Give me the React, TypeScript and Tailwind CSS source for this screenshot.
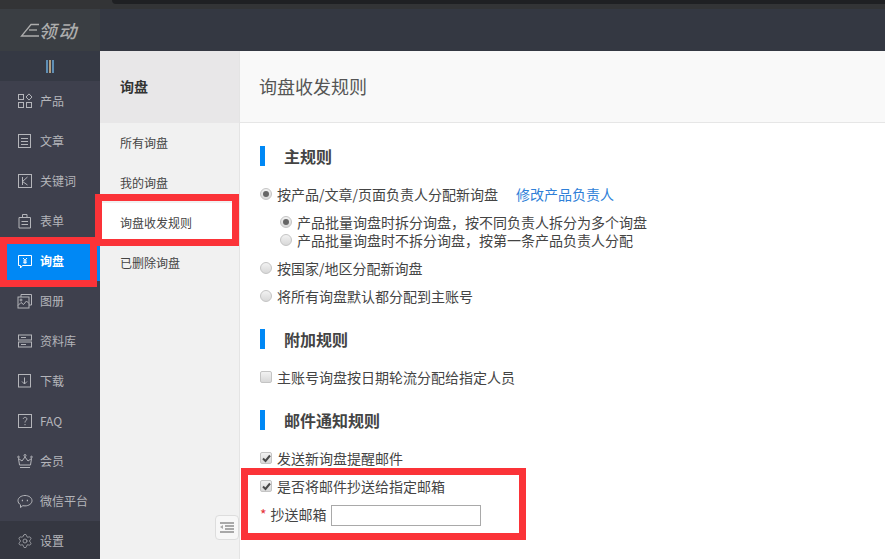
import { ReactNode } from "react";
import { Settings } from "lucide-react";

const ic = {
  width: 16,
  height: 16,
  viewBox: "0 0 16 16",
  fill: "none",
  stroke: "#b4b5ba",
  strokeWidth: 1,
};

const icons: Record<string, ReactNode> = {
  product: (
    <svg {...ic}>
      <rect x="1.5" y="1.5" width="5" height="5" />
      <rect x="1.5" y="9.5" width="5" height="5" />
      <rect x="9.5" y="9.5" width="5" height="5" />
      <path d="M12 .9 15 4l-3 3.1L9 4z" />
    </svg>
  ),
  article: (
    <svg {...ic}>
      <rect x="1.5" y="1.5" width="12" height="13" />
      <path d="M4 5.5h7M4 8.5h7M4 11.5h7" />
    </svg>
  ),
  keyword: (
    <svg {...ic}>
      <rect x="1.5" y="1.5" width="13" height="13" />
      <path d="M5.5 4v8M10.5 4l-5 4.5 5 3.5" />
    </svg>
  ),
  form: (
    <svg {...ic}>
      <path d="M2 4.5h11.5v10.500H2z" />
      <path d="M5.500 4.500V1.500h4.500v3M4.500 8.500h6.500M4.500 11.500h6.500" />
    </svg>
  ),
  inquiry: (
    <svg {...ic} stroke="#ffffff">
      <path d="M1.500 2.500h13v10H5.500L3.500 15v-2.500h-2z" />
      <path d="M6 5l2 2.200L10 5M8 7.200V11M6.200 8h3.600M6.200 9.700h3.600" />
    </svg>
  ),
  album: (
    <svg {...ic}>
      <rect x="1" y="4" width="11" height="11" />
      <path d="M4 4V1.500h10.500V12H12M1 12.500l3-3 2.500 2 3-3.500 2.500 2.500" />
      <circle cx="4" cy="7" r="1" />
    </svg>
  ),
  library: (
    <svg {...ic}>
      <rect x="1.500" y="2" width="13" height="5" />
      <rect x="1.500" y="9" width="13" height="5" />
      <path d="M4 4.500h5M4 11.500h5" />
    </svg>
  ),
  download: (
    <svg {...ic}>
      <rect x="1.500" y="1.500" width="12" height="12.500" />
      <path d="M7.500 4.500v6.500M5 8.500l2.500 2.500L10 8.500" />
    </svg>
  ),
  faq: (
    <svg {...ic}>
      <rect x="1.500" y="1.500" width="13" height="13" />
      <path d="M6.300 6c0-2.200 3.600-2.200 3.600 0 0 1.500-1.900 1.500-1.900 3.500M8 11v1.200" />
    </svg>
  ),
  member: (
    <svg {...ic}>
      <path d="M2.500 12 1.500 5.500 5 8l3-4 3 4 3.500-2.500-1 6.500z" />
      <path d="M3 14.500h10" />
      <circle cx="8" cy="2.500" r="1" />
      <circle cx="1.500" cy="4" r=".8" />
      <circle cx="14.500" cy="4" r=".8" />
    </svg>
  ),
  wechat: (
    <svg {...ic}>
      <path d="M8 2.500c3.800 0 7 2.200 7 5.200s-3.200 5.200-7 5.200c-.8 0-1.500-.1-2.200-.2L3.500 14.500v-2.700C2 10.800 1 9.400 1 7.700c0-3 3.200-5.200 7-5.200z" />
      <path d="M4.800 7.500h1.200M9.800 7.500H11" strokeWidth="1.400" />
    </svg>
  ),
};

const navItems = [
  { key: "product", label: "产品" },
  { key: "article", label: "文章" },
  { key: "keyword", label: "关键词" },
  { key: "form", label: "表单" },
  { key: "inquiry", label: "询盘", active: true },
  { key: "album", label: "图册" },
  { key: "library", label: "资料库" },
  { key: "download", label: "下载" },
  { key: "faq", label: "FAQ" },
  { key: "member", label: "会员" },
  { key: "wechat", label: "微信平台" },
];

const subItems = ["所有询盘", "我的询盘", "询盘收发规则", "已删除询盘"];

function Radio({ checked }: { checked?: boolean }) {
  return (
    <span className="flex h-[12px] w-[12px] shrink-0 items-center justify-center rounded-full border border-[#c4c4c4] bg-gradient-to-b from-[#f2f2f2] to-[#d8d8d8]">
      {checked && <span className="h-[6px] w-[6px] rounded-full bg-[#666666]" />}
    </span>
  );
}

function Checkbox({ checked }: { checked?: boolean }) {
  return (
    <span className="flex h-[12px] w-[12px] shrink-0 items-center justify-center rounded-[2px] border border-[#c4c4c4] bg-gradient-to-b from-[#f2f2f2] to-[#d8d8d8]">
      {checked && (
        <svg width="9" height="9" viewBox="0 0 9 9" fill="none" stroke="#4a4a4a" strokeWidth="2">
          <path d="M1 4.500 3.500 7 8 1.500" />
        </svg>
      )}
    </span>
  );
}

function Option({ control, children, short }: { control: ReactNode; children: ReactNode; short?: boolean }) {
  return (
    <div
      className={
        short
          ? "flex h-[18px] items-center gap-[5px] text-[14px] leading-[18px] text-[#444444]"
          : "flex h-[20px] items-center gap-[5px] text-[14px] text-[#444444]"
      }
    >
      {control}
      <span>{children}</span>
    </div>
  );
}

function SectionTitle({ children }: { children: ReactNode }) {
  return (
    <div className="flex h-[20px] items-center">
      <span className="h-[20px] w-[5px] bg-[#0088f5]" />
      <h2 className="ml-[19px] text-[16px] font-bold text-[#444444]">{children}</h2>
    </div>
  );
}

export default function App() {
  return (
    <div
      className="relative flex h-screen w-full flex-col overflow-hidden bg-white"
      style={{ fontFamily: '"Noto Sans CJK SC", "Liberation Sans", sans-serif' }}
    >
      {/* Browser edge above the app */}
      <div className="h-[9px] shrink-0 bg-[#333436]">
        <div className="ml-[112px] h-[4px] rounded-bl-[6px] bg-[#1f2023]" />
      </div>
      <header className="flex h-[42px] shrink-0 bg-[#343842]">
        <div className="flex w-[100px] items-center justify-center bg-[#3a3e43]">
          <div className="mr-[2px] flex items-center">
            <svg width="20" height="16" viewBox="0 0 20 16" fill="none" stroke="#adadad" strokeWidth="1.300">
              <path d="M19 2.500H11L1.500 14H19" />
              <path d="M9 8h8" />
            </svg>
            <span className="-ml-[1px] text-[18px] font-medium italic leading-none tracking-[2px] text-[#adadad]">
              领动
            </span>
          </div>
        </div>
      </header>

      <div className="flex min-h-0 flex-1">
        {/* Main nav */}
        <aside className="flex w-[100px] shrink-0 flex-col bg-[#3e404d]">
          <div className="flex h-[30px] shrink-0 items-center justify-center gap-[1px] bg-[#353944]">
            <span className="h-[13px] w-[2px] bg-[#5f8fb5]" />
            <span className="h-[13px] w-[2px] bg-[#b39e7e]" />
            <span className="h-[13px] w-[2px] bg-[#5f8fb5]" />
          </div>
          {navItems.map((item) => (
            <div
              key={item.key}
              className={
                item.active
                  ? "flex h-[40px] shrink-0 items-center gap-[7px] bg-[#0088f5] pl-[17px] text-[12px] font-bold text-white"
                  : "flex h-[40px] shrink-0 items-center gap-[7px] pl-[17px] text-[12px] text-[#b4b5ba]"
              }
            >
              {icons[item.key]}
              <span>{item.label}</span>
            </div>
          ))}
          <div className="flex h-[40px] shrink-0 items-center gap-[7px] bg-[#353741] pl-[17px] text-[12px] text-[#b4b5ba]">
            <Settings size={16} strokeWidth={1.1} color="#b4b5ba" />
            <span>设置</span>
          </div>
        </aside>

        {/* Sub nav */}
        <aside className="relative flex w-[140px] shrink-0 flex-col border-r border-[#e4e4e4] bg-[#f1f1f1]">
          <div className="flex h-[72px] items-center bg-[#e8e7e8] pb-[2px] pl-[20px] text-[14px] font-bold text-[#333333]">
            询盘
          </div>
          {subItems.map((s, i) => (
            <div
              key={s}
              className={
                i === 2
                  ? "flex h-[40px] items-center bg-white pl-[20px] text-[12px] text-[#444444]"
                  : "flex h-[40px] items-center pl-[20px] text-[12px] text-[#444444]"
              }
            >
              {s}
            </div>
          ))}
          <button className="absolute bottom-[19px] right-0 flex h-[25px] w-[24px] items-center justify-center rounded-[4px] border border-[#dddddd] bg-[#f7f7f7]">
            <svg width="14" height="11" viewBox="0 0 14 11" fill="#a8a8a8">
              <path d="M0 0h14v2H0zM5 3h9v2H5zM5 6h9v2H5zM0 9h14v2H0zM3 3v4L0 5z" />
            </svg>
          </button>
        </aside>

        {/* Content */}
        <main className="flex min-w-0 flex-1 flex-col">
          <div className="flex h-[72px] shrink-0 items-center border-b border-[#e6e6e6] bg-[#f9f9f9] pl-[19px] text-[18px] text-[#555555]">
            询盘收发规则
          </div>
          <div className="flex flex-col pl-[20px] pt-[23px]">
            <SectionTitle>主规则</SectionTitle>
            <div className="mt-[18px]">
              <Option control={<Radio checked />}>
                按产品/文章/页面负责人分配新询盘
                <a className="ml-[18px] text-[#2f7fd8]">修改产品负责人</a>
              </Option>
            </div>
            <div className="mt-[9px] pl-[20px]">
              <Option short control={<Radio checked />}>
                产品批量询盘时拆分询盘，按不同负责人拆分为多个询盘
              </Option>
              <Option short control={<Radio />}>
                产品批量询盘时不拆分询盘，按第一条产品负责人分配
              </Option>
            </div>
            <div className="mt-[9px]">
              <Option control={<Radio />}>按国家/地区分配新询盘</Option>
            </div>
            <div className="mt-[8px]">
              <Option control={<Radio />}>将所有询盘默认都分配到主账号</Option>
            </div>

            <div className="mt-[23px]">
              <SectionTitle>附加规则</SectionTitle>
            </div>
            <div className="mt-[18px]">
              <Option control={<Checkbox />}>主账号询盘按日期轮流分配给指定人员</Option>
            </div>

            <div className="mt-[23px]">
              <SectionTitle>邮件通知规则</SectionTitle>
            </div>
            <div className="mt-[18px]">
              <Option control={<Checkbox checked />}>发送新询盘提醒邮件</Option>
            </div>
            <div className="mt-[8px]">
              <Option control={<Checkbox checked />}>是否将邮件抄送给指定邮箱</Option>
            </div>
            <div className="mt-[8px] flex items-start text-[14px] text-[#444444]">
              <span className="mr-[4px] text-[#e5333a]">*</span>
              <span>抄送邮箱</span>
              <input className="ml-[4px] mt-[1px] h-[21px] w-[150px] border border-[#a9a9a9] bg-white" />
            </div>
          </div>
        </main>
      </div>

      {/* Red annotation boxes */}
      <div className="absolute left-0 top-[237px] h-[50px] w-[97px] border-[7px] border-[#fb3338]" />
      <div className="absolute left-[95px] top-[194px] h-[52px] w-[144px] border-[7px] border-[#fb3338]" />
      <div className="absolute left-[241px] top-[468px] h-[72px] w-[285px] border-[7px] border-[#fb3338]" />
    </div>
  );
}
